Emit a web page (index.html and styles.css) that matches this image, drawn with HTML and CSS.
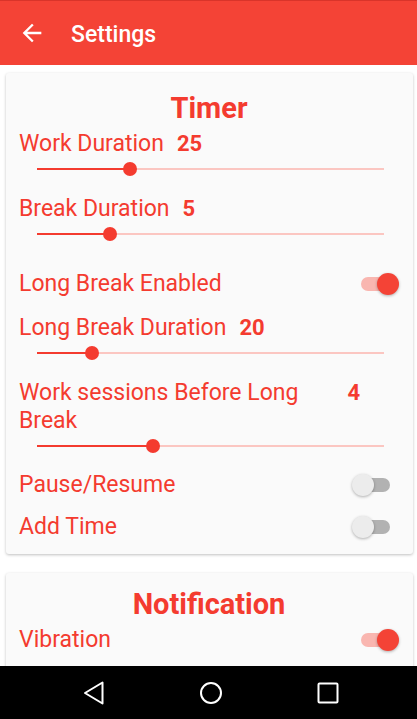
FILE: index.html
```html
<!DOCTYPE html>
<html>
  <head>
    <title>Settings</title>
    <link rel="stylesheet" href="styles.css">
  </head>
  <body>
    <div class="screen">
      <header class="appbar">
        <svg class="back" viewBox="0 0 24 24" width="28" height="28">
          <path d="M20 11H7.83l5.59-5.59L12 4l-8 8 8 8 1.41-1.41L7.83 13H20v-2z" fill="#fff" />
        </svg>
        <h1>Settings</h1>
      </header>

      <main class="content">
        <section class="card">
          <h2>Timer</h2>

          <div class="setting gap-work">
            <div class="value-row">
              <span class="label">Work Duration</span>
              <span class="value">25</span>
            </div>
            <div class="slider">
              <div class="track"><div class="fill" style="width: 26.8%"></div></div>
              <div class="thumb" style="left: 26.8%"></div>
            </div>
          </div>

          <div class="setting gap-break">
            <div class="value-row">
              <span class="label">Break Duration</span>
              <span class="value">5</span>
            </div>
            <div class="slider">
              <div class="track"><div class="fill" style="width: 21%"></div></div>
              <div class="thumb" style="left: 21%"></div>
            </div>
          </div>

          <div class="switch-row gap-long">
            <span class="label">Long Break Enabled</span>
            <div class="switch on"><div class="switch-track"></div><div class="switch-thumb"></div></div>
          </div>

          <div class="setting gap-longdur">
            <div class="value-row">
              <span class="label">Long Break Duration</span>
              <span class="value">20</span>
            </div>
            <div class="slider">
              <div class="track"><div class="fill" style="width: 15.8%"></div></div>
              <div class="thumb" style="left: 15.8%"></div>
            </div>
          </div>

          <div class="setting gap-sessions">
            <div class="value-row">
              <span class="label">Work sessions Before Long Break</span>
              <span class="value">4</span>
            </div>
            <div class="slider">
              <div class="track"><div class="fill" style="width: 33.4%"></div></div>
              <div class="thumb" style="left: 33.4%"></div>
            </div>
          </div>

          <div class="switch-row gap-pause">
            <span class="label">Pause/Resume</span>
            <div class="switch"><div class="switch-track"></div><div class="switch-thumb"></div></div>
          </div>

          <div class="switch-row gap-add">
            <span class="label">Add Time</span>
            <div class="switch"><div class="switch-track"></div><div class="switch-thumb"></div></div>
          </div>
        </section>

        <section class="card card-notify">
          <h2>Notification</h2>
          <div class="switch-row gap-vibe">
            <span class="label">Vibration</span>
            <div class="switch on"><div class="switch-track"></div><div class="switch-thumb"></div></div>
          </div>
        </section>
      </main>

      <nav class="navbar">
        <svg viewBox="0 0 24 24" width="24" height="24">
          <path d="M20.5 1.5v21L3 12z" fill="none" stroke="#fff" stroke-width="2" stroke-linejoin="round" />
        </svg>
        <svg viewBox="0 0 24 24" width="24" height="24">
          <circle cx="12" cy="12" r="10" fill="none" stroke="#fff" stroke-width="2" />
        </svg>
        <svg viewBox="0 0 24 24" width="24" height="24">
          <rect x="2.5" y="2.5" width="19" height="19" rx="1" fill="none" stroke="#fff" stroke-width="2" />
        </svg>
      </nav>
    </div>
  </body>
</html>
```

FILE: styles.css
```css
body {
  margin: 0;
  padding: 0;
  font-family: Roboto, "Noto Sans", sans-serif;
  background-color: #fff;
}
.screen {
  width: 417px;
  height: 719px;
  display: flex;
  flex-direction: column;
  overflow: hidden;
}
.appbar {
  flex: 0 0 auto;
  height: 65px;
  border-top: 1px solid #d9342a;
  background-color: #f44336;
  display: flex;
  align-items: center;
  padding-left: 18px;
  box-sizing: border-box;
}
.appbar h1 {
  margin: 2px 0 0 25px;
  color: #fff;
  font-size: 23px;
  font-weight: 500;
}
.content {
  flex: 1 1 auto;
  overflow: hidden;
  padding: 8px 4px 0 6px;
  background-color: #fff;
}
.card {
  background-color: #fafafa;
  border-radius: 3px;
  box-shadow: 0 1px 3px rgba(0, 0, 0, 0.25);
  padding: 15px 14px 13px 13px;
  color: #f43b2f;
}
.card-notify {
  margin-top: 19px;
  padding-top: 11px;
  padding-bottom: 40px;
}
.card h2 {
  margin: 0;
  text-align: center;
  font-size: 29px;
  font-weight: 700;
  line-height: 40px;
}
.label {
  font-size: 23px;
  line-height: 28px;
}
.value-row {
  display: flex;
  align-items: flex-start;
  padding-right: 39px;
}
.value {
  flex: 0 0 auto;
  margin-left: 13px;
  font-size: 22px;
  font-weight: 700;
  line-height: 28px;
}
.slider {
  position: relative;
  height: 22px;
  margin: 0 15px 0 18px;
}
.track {
  position: absolute;
  left: 0;
  right: 0;
  top: 10px;
  height: 2px;
  background-color: #fbc6c1;
}
.fill {
  height: 100%;
  background-color: #f43b2f;
}
.thumb {
  position: absolute;
  top: 11px;
  width: 14px;
  height: 14px;
  margin: -7px 0 0 -7px;
  border-radius: 50%;
  background-color: #f43b2f;
}
.switch-row {
  display: flex;
  justify-content: space-between;
  align-items: center;
  height: 28px;
}
.switch {
  position: relative;
  width: 47px;
  height: 28px;
}
.switch-track {
  position: absolute;
  top: 7px;
  left: 4px;
  width: 34px;
  height: 14px;
  border-radius: 7px;
  background-color: #b2b2b2;
}
.switch-thumb {
  position: absolute;
  top: 3px;
  left: 0;
  width: 22px;
  height: 22px;
  border-radius: 50%;
  background-color: #ececec;
  box-shadow: 0 1px 3px rgba(0, 0, 0, 0.3);
}
.switch.on .switch-track {
  left: 9px;
  background-color: #f9b6b0;
}
.switch.on .switch-thumb {
  left: 25px;
  background-color: #f44336;
}
.gap-work { margin-top: 2px; }
.gap-break { margin-top: 15px; }
.gap-long { margin-top: 25px; }
.gap-longdur { margin-top: 16px; }
.gap-sessions { margin-top: 15px; }
.gap-pause { margin-top: 14px; }
.gap-add { margin-top: 14px; }
.gap-vibe { margin-top: 2px; }
.navbar {
  flex: 0 0 53px;
  background-color: #000;
  display: flex;
  justify-content: center;
  align-items: center;
  gap: 93px;
  padding-left: 5px;
}
```
